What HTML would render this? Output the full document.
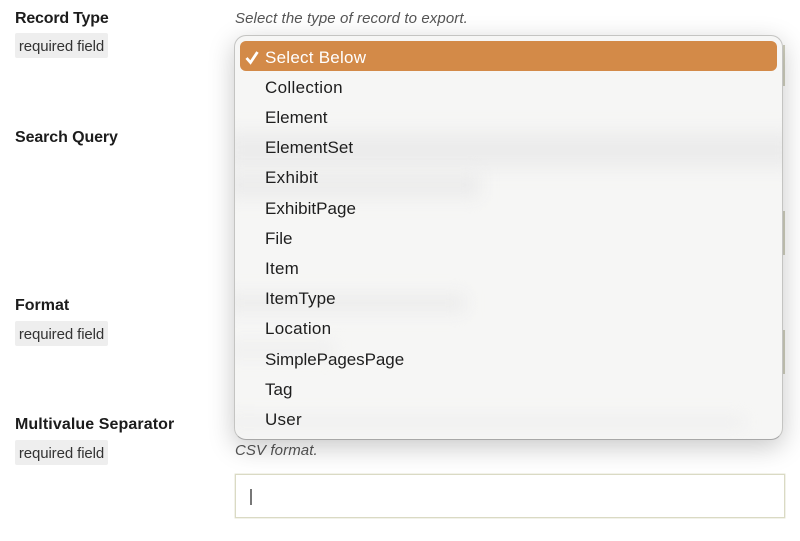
<!DOCTYPE html>
<html>
<head>
<meta charset="utf-8">
<style>
html,body{margin:0;padding:0;width:800px;height:541px;overflow:hidden;background:#fff;}
body{position:relative;font-family:"Liberation Sans",sans-serif;color:#222;}
.a{position:absolute;white-space:nowrap;}
.lbl{left:15px;font-weight:bold;font-size:16px;line-height:20px;color:#1c1c1c;}
.req{left:15px;width:93px;height:25px;background:#eee;border-radius:2px;font-size:15px;line-height:27px;text-align:center;color:#333;letter-spacing:-.1px;}
.desc{left:235px;font-style:italic;font-size:15px;line-height:20px;color:#555;letter-spacing:.1px;}
.edge{left:783px;width:2px;background:#cfcfbe;}
.input{left:235px;top:474px;width:548px;height:42px;border:1px solid #dadac4;box-shadow:0 0 0 .5px #e6e6d6;background:#fff;}
.caret{left:250px;top:489px;width:1.5px;height:16px;background:#777;}
.pop{left:234px;top:35px;width:549px;height:405px;box-sizing:border-box;border-radius:12px;background:#f6f6f5;border:1px solid #c4c4c2;border-bottom-color:#a8a8a8;box-shadow:0 7px 26px rgba(0,0,0,.22);overflow:hidden;}
.smear{position:absolute;background:#ececec;filter:blur(8px);}
.hl{position:absolute;left:5px;top:5px;width:537px;height:30px;border-radius:6px;background:#d38a48;}
.it{position:absolute;left:30px;font-size:17px;line-height:20px;color:#1e1e1e;white-space:nowrap;letter-spacing:.02px;}
</style>
</head>
<body>
<div class="a lbl" style="top:9px;letter-spacing:-.2px">Record Type</div>
<div class="a req" style="top:33px">required field</div>
<div class="a lbl" style="top:128px;letter-spacing:-.1px">Search Query</div>
<div class="a lbl" style="top:296px">Format</div>
<div class="a req" style="top:321px">required field</div>
<div class="a lbl" style="top:415px;letter-spacing:.1px">Multivalue Separator</div>
<div class="a req" style="top:440px">required field</div>
<div class="a desc" style="top:9px">Select the type of record to export.</div>
<div class="a desc" style="top:441px">CSV format.</div>
<div class="a edge" style="top:45px;height:41px"></div>
<div class="a edge" style="top:211px;height:44px"></div>
<div class="a edge" style="top:330px;height:44px"></div>
<div class="a input"></div>
<div class="a caret"></div>
<div class="a pop">
  <div class="smear" style="left:-10px;top:96px;width:570px;height:36px"></div>
  <div class="smear" style="left:-10px;top:136px;width:255px;height:26px"></div>
  <div class="smear" style="left:-10px;top:258px;width:240px;height:18px"></div>
  <div class="smear" style="left:-10px;top:305px;width:110px;height:18px;opacity:.6"></div>
  <div class="smear" style="left:-10px;top:380px;width:520px;height:12px;opacity:.7"></div>
  <div class="hl"></div>
  <svg style="position:absolute;left:10px;top:14px" width="15" height="15" viewBox="0 0 15 15"><path d="M1.5 8 L5.5 12.5 L12.5 2" fill="none" stroke="#fff" stroke-width="2.8"/></svg>
  <div class="it" style="top:12px;color:#fff;letter-spacing:.25px">Select Below</div>
  <div class="it" style="top:42px;letter-spacing:.33px">Collection</div>
  <div class="it" style="top:72px">Element</div>
  <div class="it" style="top:102px">ElementSet</div>
  <div class="it" style="top:132px;letter-spacing:.3px">Exhibit</div>
  <div class="it" style="top:163px">ExhibitPage</div>
  <div class="it" style="top:193px">File</div>
  <div class="it" style="top:223px;letter-spacing:.25px">Item</div>
  <div class="it" style="top:253px;letter-spacing:.1px">ItemType</div>
  <div class="it" style="top:283px;letter-spacing:.25px">Location</div>
  <div class="it" style="top:314px;letter-spacing:-.05px">SimplePagesPage</div>
  <div class="it" style="top:344px">Tag</div>
  <div class="it" style="top:374px;letter-spacing:.25px">User</div>
</div>
</body>
</html>
